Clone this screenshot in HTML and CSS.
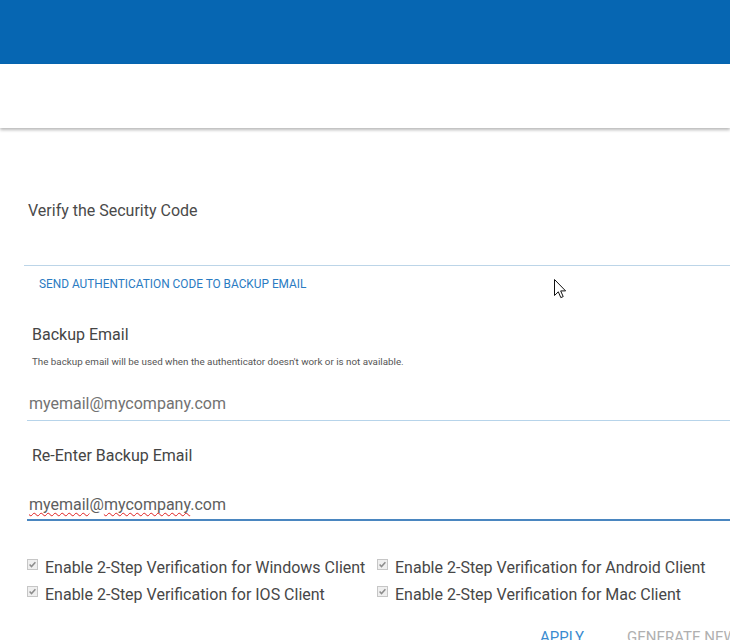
FILE: index.html
```html
<!DOCTYPE html>
<html lang="en">
<head>
<meta charset="utf-8">
<title>Verify the Security Code</title>
<link rel="stylesheet" href="styles.css">
</head>
<body>
<header class="topbar"></header>
<div class="subbar"></div>
<main class="content">
  <h2 class="title">Verify the Security Code</h2>
  <div class="divider"></div>
  <a class="send-link" href="#">SEND AUTHENTICATION CODE TO BACKUP EMAIL</a>

  <div class="field-label first">Backup Email</div>
  <div class="hint">The backup email will be used when the authenticator doesn't work or is not available.</div>
  <div class="text-input">myemail@mycompany.com</div>

  <div class="field-label second">Re-Enter Backup Email</div>
  <div class="text-input focused"><span class="misspelled">myemail</span>@<span class="misspelled">mycompany</span>.com</div>

  <div class="checks">
    <label class="check">
      <svg class="box" width="11" height="11" viewBox="0 0 11 11"><rect x="0.5" y="0.5" width="10" height="10" fill="#efefef" stroke="#c6c6c6"/><path d="M2.6 5.6 L4.5 7.6 L8.4 3.2" fill="none" stroke="#8d8d8d" stroke-width="1.5"/></svg>
      <span>Enable 2-Step Verification for Windows Client</span>
    </label>
    <label class="check">
      <svg class="box" width="11" height="11" viewBox="0 0 11 11"><rect x="0.5" y="0.5" width="10" height="10" fill="#efefef" stroke="#c6c6c6"/><path d="M2.6 5.6 L4.5 7.6 L8.4 3.2" fill="none" stroke="#8d8d8d" stroke-width="1.5"/></svg>
      <span>Enable 2-Step Verification for Android Client</span>
    </label>
    <label class="check">
      <svg class="box" width="11" height="11" viewBox="0 0 11 11"><rect x="0.5" y="0.5" width="10" height="10" fill="#efefef" stroke="#c6c6c6"/><path d="M2.6 5.6 L4.5 7.6 L8.4 3.2" fill="none" stroke="#8d8d8d" stroke-width="1.5"/></svg>
      <span>Enable 2-Step Verification for IOS Client</span>
    </label>
    <label class="check">
      <svg class="box" width="11" height="11" viewBox="0 0 11 11"><rect x="0.5" y="0.5" width="10" height="10" fill="#efefef" stroke="#c6c6c6"/><path d="M2.6 5.6 L4.5 7.6 L8.4 3.2" fill="none" stroke="#8d8d8d" stroke-width="1.5"/></svg>
      <span>Enable 2-Step Verification for Mac Client</span>
    </label>
  </div>

  <div class="actions">
    <span class="btn primary">APPLY</span>
    <span class="btn muted">GENERATE NEW CODE</span>
  </div>
</main>
<svg class="pointer" width="14" height="21" viewBox="0 0 14 21"><path d="M0.5 0.5 L0.5 16.5 L4.3 12.8 L6.8 18.6 L9.2 17.6 L6.7 11.9 L11.6 11.9 Z" fill="#ffffff" stroke="#111" stroke-width="1" stroke-linejoin="miter"/></svg>
</body>
</html>
```

FILE: styles.css
```css
html, body {
  margin: 0;
  padding: 0;
  overflow: hidden;
  background: #ffffff;
}

body {
  position: relative;
  width: 730px;
  height: 640px;
  font-family: Roboto, "Liberation Sans", Arial, sans-serif;
  color: #444444;
}

.topbar {
  height: 64px;
  background: #0666b2;
}

.subbar {
  height: 64px;
  background: #ffffff;
  box-shadow: 0 2px 3px rgba(0, 0, 0, 0.28);
  position: relative;
}

.content {
  padding-left: 24px;
  display: flex;
  flex-direction: column;
  align-items: stretch;
}

.title {
  margin: 73px 0 0 0;
  padding-left: 4px;
  font-size: 16px;
  font-weight: 400;
  line-height: 20px;
  color: #4a4a4a;
}

.divider {
  margin-top: 44px;
  height: 1px;
  background: #bcd5e8;
}

.send-link {
  margin-top: 11px;
  padding-left: 15px;
  font-size: 11.85px;
  line-height: 14px;
  color: #2a7bc2;
  text-decoration: none;
  white-space: nowrap;
}

.field-label {
  padding-left: 8px;
  font-size: 16px;
  line-height: 20px;
  color: #454545;
}

.field-label.first {
  margin-top: 34px;
}

.field-label.second {
  margin-top: 25px;
}

.hint {
  margin-top: 11px;
  padding-left: 8px;
  font-size: 9.8px;
  line-height: 12px;
  color: #555555;
  white-space: nowrap;
}

.text-input {
  margin-top: 26px;
  margin-left: 3px;
  padding: 0 0 6px 2px;
  font-size: 16px;
  line-height: 20px;
  color: #727272;
  border-bottom: 1px solid #b7d4ea;
}

.text-input.focused {
  margin-top: 29px;
  padding-bottom: 4px;
  color: #5e5e5e;
  border-bottom: 2px solid #4a86c0;
}

.misspelled {
  text-decoration: underline wavy #e02020;
  text-decoration-thickness: 1px;
  text-underline-offset: 2px;
  text-decoration-skip-ink: none;
}

.checks {
  margin-top: 37px;
  padding-left: 3px;
  display: grid;
  grid-template-columns: 350px 350px;
  row-gap: 7px;
}

.check {
  display: flex;
  align-items: flex-start;
  gap: 7px;
  font-size: 16px;
  line-height: 20px;
  color: #474747;
  white-space: nowrap;
}

.check .box {
  flex: none;
  margin-top: 1px;
}

.actions {
  margin-top: 23px;
  padding-left: 500px;
  display: flex;
  gap: 11px;
}

.btn {
  flex: none;
  padding: 0 16px;
  font-size: 15px;
  line-height: 18px;
  white-space: nowrap;
}

.btn.primary {
  color: #3a8bd0;
}

.btn.muted {
  color: #b0b0b0;
}

.pointer {
  position: absolute;
  left: 554px;
  top: 279px;
}
```
